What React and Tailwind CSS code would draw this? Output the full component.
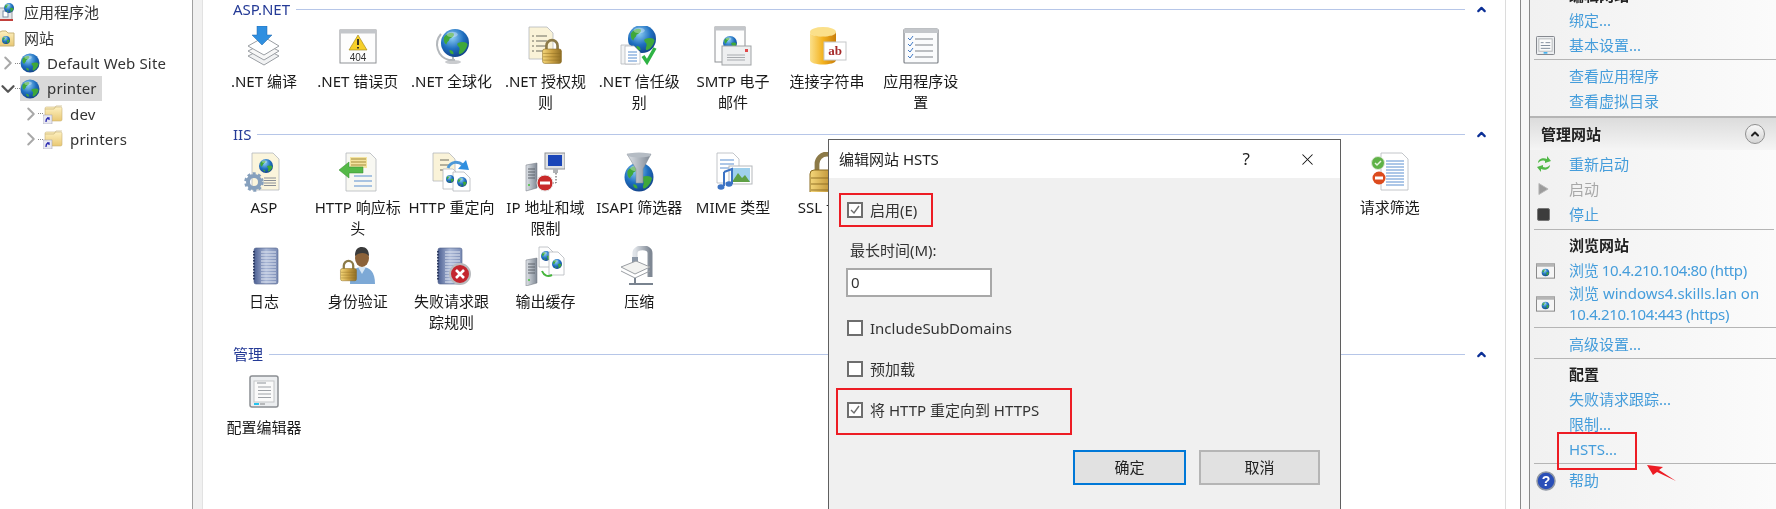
import React from "react";
import { ChevronUp, ChevronRight, ChevronDown, X } from "lucide-react";

const Defs = () => (
  <svg className="absolute w-0 h-0">
    <defs>
      <radialGradient id="globe" cx="40%" cy="30%" r="75%">
        <stop offset="0%" stopColor="#8fd0f5" />
        <stop offset="55%" stopColor="#1f6fc0" />
        <stop offset="100%" stopColor="#123f86" />
      </radialGradient>
      <linearGradient id="gold" x1="0" y1="0" x2="1" y2="0">
        <stop offset="0%" stopColor="#f5d77a" />
        <stop offset="50%" stopColor="#c9a043" />
        <stop offset="100%" stopColor="#8f6e25" />
      </linearGradient>
      <linearGradient id="can" x1="0" y1="0" x2="1" y2="0">
        <stop offset="0%" stopColor="#fbe08a" />
        <stop offset="50%" stopColor="#f3b21f" />
        <stop offset="100%" stopColor="#c97d08" />
      </linearGradient>
      <linearGradient id="book" x1="0" y1="0" x2="1" y2="0">
        <stop offset="0%" stopColor="#4c5f92" />
        <stop offset="50%" stopColor="#a9b7d6" />
        <stop offset="100%" stopColor="#7b8cb5" />
      </linearGradient>
      <linearGradient id="steel" x1="0" y1="0" x2="1" y2="0">
        <stop offset="0%" stopColor="#dfe3e8" />
        <stop offset="100%" stopColor="#7f8894" />
      </linearGradient>
      <linearGradient id="folder" x1="0" y1="0" x2="0" y2="1">
        <stop offset="0%" stopColor="#fdf0c0" />
        <stop offset="100%" stopColor="#e9c873" />
      </linearGradient>
    </defs>
  </svg>
);

const Globe = ({ x, y, r }) => (
  <g transform={`translate(${x} ${y}) scale(${r / 10})`}>
    <circle r="10" fill="url(#globe)" />
    <path d="M-8-4c2-3 5-4 7-3 1 2-1 3-3 4 0 2-2 2-2 4-2-1-2-3-2-5zM2 0c3-1 6-1 7 1-1 4-4 7-6 7-1-2 1-3 0-5-1-1-2-2-1-3zM-4 5c2 0 3 1 3 3-2 0-3-1-3-3z" fill="#3fa83a" />
    <ellipse cx="-2" cy="-6" rx="4" ry="2" fill="#fff" opacity=".35" />
  </g>
);

const Lock = ({ x, y, w = 18 }) => (
  <g transform={`translate(${x} ${y}) scale(${w / 18})`}>
    <path d="M4 10V6a5 5 0 0 1 10 0v4" fill="none" stroke="#8c7a48" strokeWidth="2.4" />
    <rect x="0.5" y="9" width="17" height="13" rx="2" fill="url(#gold)" stroke="#8a6a20" strokeWidth=".5" />
    <path d="M1 13h16M1 16h16M1 19h16" stroke="#8a6a20" strokeWidth=".7" opacity=".6" />
  </g>
);

const Page = ({ x, y, w, h, fill = "#fff" }) => (
  <path d={`M${x} ${y}h${w - 6}l6 6v${h - 6}h-${w}z`} fill={fill} stroke="#b4b8bd" strokeWidth=".8" />
);

const Lines = ({ x, y, w, n, gap = 3, color = "#5b8fd0" }) => (
  <g stroke={color} strokeWidth="1">
    {Array.from({ length: n }).map((_, i) => (
      <path key={i} d={`M${x} ${y + i * gap}h${w}`} />
    ))}
  </g>
);

const Win = ({ x, y, w, h }) => (
  <g>
    <rect x={x} y={y} width={w} height={h} fill="#fdfdfd" stroke="#8f9296" />
    <rect x={x} y={y} width={w} height="3.5" fill="#c3c6ca" />
  </g>
);

const Book = ({ x = 10 }) => (
  <g>
    <rect x={x} y="2" width="24" height="36" rx="2" fill="url(#book)" stroke="#51618c" strokeWidth=".6" />
    <Lines x={x + 7} y={6} w={15} n={11} gap={3} color="#e3e8f2" />
    <path d={`M${x} 5v30`} stroke="#2f3c63" strokeWidth="2" strokeDasharray="1.5 1.5" />
  </g>
);

const Server = ({ x, y }) => (
  <g>
    <path d={`M${x} ${y + 2}l11-2v25l-11 3z`} fill="url(#steel)" stroke="#6c737d" strokeWidth=".5" />
    <Lines x={x + 2} y={y + 6} w={7} n={4} gap={3} color="#5e646c" />
    <circle cx={x + 3} cy={y + 22} r="1" fill="#46c13c" />
  </g>
);

const icons = {
  compile: (
    <g>
      <path d="M4 30l16-8 15 8-15 9z" fill="#f1f2f3" stroke="#9a9ea3" />
      <path d="M4 25l16-8 15 8-15 9z" fill="#f7f7f7" stroke="#9a9ea3" />
      <path d="M4 20l16-9 15 9-15 9z" fill="#fff" stroke="#9a9ea3" />
      <path d="M13 0h10v9h5L18 19 8 9h5z" fill="#2f8fe0" stroke="#1f66ad" strokeWidth=".5" />
    </g>
  ),
  error404: (
    <g>
      <Win x="2" y="4" w="36" h="33" />
      <path d="M20 9l9 15H11z" fill="#f6cf2a" stroke="#9a7f12" strokeWidth=".6" />
      <path d="M20 13v6m0 2v1.6" stroke="#222" strokeWidth="1.8" />
      <text x="20" y="35" fontSize="10" textAnchor="middle" fill="#333" fontFamily="Liberation Sans">404</text>
    </g>
  ),
  globalize: (
    <g>
      <ellipse cx="21" cy="36" rx="8" ry="2" fill="#c9cbce" />
      <path d="M9 8a16 16 0 0 0 8 26h6" fill="none" stroke="#b4b8bc" strokeWidth="2" />
      <path d="M21 30v5" stroke="#b4b8bc" strokeWidth="2" />
      <Globe x={23} y={17} r={14} />
    </g>
  ),
  authRules: (
    <g>
      <Page x="4" y="1" w="24" h="32" fill="#faf3d8" />
      <Lines x="11" y={10} w={11} n={4} gap={5} color="#6d6d60" />
      <Lines x="7" y={10} w={2} n={4} gap={5} color="#6d6d60" />
      <Lock x={17} y={13} w={20} />
    </g>
  ),
  trust: (
    <g>
      <Globe x={23} y={13} r={14} />
      <Page x="2" y="19" w="15" h="19" fill="#f2f3f4" />
      <Page x="6" y="20" w="15" h="18" />
      <Lines x="9" y={26} w={9} n={4} gap={3} />
      <path d="M24 30l4 6 8-14" fill="none" stroke="#2fb344" strokeWidth="3.5" />
    </g>
  ),
  smtp: (
    <g>
      <Win x="2" y="1" w="30" h="35" />
      <Globe x={17} y={17} r={7} />
      <rect x="9" y="20" width="29" height="19" fill="#eeeff0" stroke="#a0a3a6" />
      <rect x="32" y="23" width="3" height="3" fill="#e0484a" />
      <Lines x="14" y={29} w={18} n={3} gap={2.5} color="#a8abaf" />
    </g>
  ),
  connStr: (
    <g>
      <ellipse cx="16" cy="6" rx="13" ry="5" fill="#fbe08a" />
      <path d="M3 6v28c0 6 26 6 26 0V6c0 6-26 6-26 0z" fill="url(#can)" />
      <rect x="17" y="16" width="22" height="18" fill="#fff" stroke="#c5c7c9" />
      <text x="28" y="29" fontSize="13" textAnchor="middle" fontWeight="700" fill="#a52a2a" fontFamily="Liberation Serif">ab</text>
    </g>
  ),
  appSettings: (
    <g>
      <rect x="3" y="3" width="34" height="34" rx="1" fill="#fafbfc" stroke="#7d8187" strokeWidth="1.2" />
      <rect x="3" y="3" width="34" height="4" fill="#c3c6ca" />
      <Lines x="14" y={13} w={18} n={4} gap={6} color="#7d8187" />
      <path d="M7 12l2 2 3-4M7 18l2 2 3-4M7 24l2 2 3-4M7 30l2 2 3-4" fill="none" stroke="#3f78c4" strokeWidth="1" />
    </g>
  ),
  asp: (
    <g>
      <Page x="8" y="1" w="27" h="37" fill="#fbf5dc" />
      <Globe x={22} y={14} r={7} />
      <Lines x="20" y={26} w={12} n={4} gap={2.5} color="#8a8f96" />
      <circle cx="10" cy="30" r="6" fill="none" stroke="#86a0bd" strokeWidth="4" />
      <circle cx="10" cy="30" r="8.5" fill="none" stroke="#86a0bd" strokeWidth="2.5" strokeDasharray="3 2.5" />
    </g>
  ),
  httpHeader: (
    <g>
      <Page x="8" y="1" w="30" h="38" fill="#f8f8f2" />
      <rect x="12" y="5" width="17" height="11" fill="#f4e4a0" />
      <Lines x="13" y={7} w={15} n={3} color="#a58d3a" />
      <Lines x="16" y={24} w={18} n={3} gap={5} color="#5b8fd0" />
      <path d="M1 18l10-8v5h14v6H11v5z" fill="#55b948" stroke="#338a2d" strokeWidth=".5" />
    </g>
  ),
  redirect: (
    <g>
      <Page x="1" y="1" w="22" h="28" fill="#faf3d8" />
      <Lines x="8" y={8} w={9} n={3} gap={5} color="#6d6d60" />
      <Page x="11" y="17" w="16" h="20" />
      <Page x="21" y="20" w="17" h="19" />
      <Globe x={18} y={27} r={4} />
      <Globe x={30} y={30} r={5} />
      <path d="M16 16c3-7 10-7 15-3" fill="none" stroke="#4b97d8" strokeWidth="3" />
      <path d="M26 17l11 1-3-10z" fill="#2f8fe0" />
    </g>
  ),
  ipRestrict: (
    <g>
      <Server x={1} y={11} />
      <rect x="20" y="1" width="20" height="16" fill="#dfe1e3" stroke="#8f9296" />
      <rect x="23" y="3" width="14" height="11" fill="#1b46b8" />
      <rect x="28" y="17" width="5" height="4" fill="#b0b2b5" />
      <path d="M31 21v10h-6" fill="none" stroke="#444" strokeDasharray="1.5 1.5" />
      <circle cx="20" cy="31" r="8" fill="#c92a2a" stroke="#e8e8e8" />
      <rect x="15" y="29.5" width="10" height="3" fill="#fff" />
    </g>
  ),
  isapi: (
    <g>
      <Globe x={20} y={25} r={14.5} />
      <path d="M8 2h24L24 17v14h-7V17z" fill="url(#steel)" stroke="#7c848d" strokeWidth=".5" />
      <ellipse cx="20" cy="3" rx="12" ry="2.5" fill="#b5bcc4" />
    </g>
  ),
  mime: (
    <g>
      <Page x="4" y="1" w="22" h="30" />
      <Lines x="7" y={8} w={14} n={3} gap={4} />
      <rect x="16" y="14" width="23" height="18" fill="#fff" stroke="#b5b8bb" />
      <rect x="18" y="16" width="19" height="14" fill="#9fd0ec" />
      <path d="M19 30l6-9 4 5 3-3 5 7z" fill="#5fa045" />
      <path d="M11 20l8-3v15" fill="none" stroke="#3c73c4" strokeWidth="2" />
      <path d="M11 20v14" stroke="#3c73c4" strokeWidth="2" />
      <ellipse cx="8" cy="35" rx="3.5" ry="2.8" fill="#3c73c4" />
      <ellipse cx="16" cy="32" rx="3.5" ry="2.8" fill="#3c73c4" />
    </g>
  ),
  ssl: <Lock x={2} y={0} w={36} />,
  filter: (
    <g>
      <Page x="11" y="1" w="27" h="37" />
      <Lines x="16" y={9} w={18} n={9} gap={3} />
      <circle cx="8" cy="11" r="6.5" fill="#5fb247" stroke="#dfe8d8" />
      <path d="M5 11l2 2 4-4" fill="none" stroke="#e8f5e0" strokeWidth="1.5" />
      <circle cx="9" cy="26" r="6.5" fill="#dc4b1e" />
      <rect x="5" y="24.5" width="8" height="3" fill="#fff" />
    </g>
  ),
  log: <Book />,
  auth: (
    <g>
      <path d="M12 38c0-12 4-17 12-17s13 5 13 17z" fill="#7da9d6" />
      <path d="M20 21l4 7 4-7z" fill="#d6e6f5" />
      <ellipse cx="24" cy="12" rx="7" ry="9" fill="#8c6239" />
      <path d="M17 10c0-7 3-9 7-9s7 3 7 9c-3-4-10-4-14 0z" fill="#3a3a3a" />
      <Lock x={2} y={14} w={17} />
    </g>
  ),
  failLog: (
    <g>
      <Book x={6} />
      <circle cx="28" cy="28" r="10" fill="#c4262e" stroke="#b9bbbe" strokeWidth="2" />
      <path d="M24 24l8 8m0-8l-8 8" stroke="#fff" strokeWidth="2.6" />
    </g>
  ),
  output: (
    <g>
      <Server x={1} y={12} />
      <Page x="14" y="1" w="15" h="20" fill="#fdfdfd" />
      <Globe x={21} y={10} r={5} />
      <Page x="24" y="6" w="15" h="23" />
      <Globe x={32} y={18} r={5} />
      <path d="M17 25c2 5 6 6 10 4" fill="none" stroke="#46b53c" strokeWidth="2" />
    </g>
  ),
  compress: (
    <g>
      <path d="M31 31V7c0-7-15-7-15 0v5" fill="none" stroke="url(#steel)" strokeWidth="5" />
      <rect x="13" y="11" width="6" height="6" fill="#8b97a6" />
      <path d="M2 21l15-6 14 6-15 7z" fill="#f3f3f1" stroke="#9a9ea3" />
      <path d="M2 25l14 7 15-7" fill="none" stroke="#9a9ea3" />
      <path d="M16 32v5M10 38h24" stroke="#79838f" strokeWidth="2" />
    </g>
  ),
  config: (
    <g>
      <rect x="6" y="4" width="28" height="31" rx="2" fill="#eceef0" stroke="#8b8e92" strokeWidth="1.5" />
      <rect x="10" y="9" width="20" height="21" fill="#fafafa" stroke="#c4c6c8" />
      <rect x="13" y="10" width="9" height="2" fill="#c3c6c9" />
      <Lines x="14" y={15} w={13} n={4} gap={3.5} color="#9ea2a7" />
      <rect x="10" y="31" width="5" height="2" fill="#25c3ee" />
      <rect x="16" y="31" width="5" height="2" fill="#b7b9bb" />
    </g>
  ),
};

const Icon = ({ name }) => (
  <svg viewBox="0 0 40 40" className="w-10 h-10 block">
    {icons[name]}
  </svg>
);

const Tile = ({ icon, label }) => (
  <div className="w-[93.83px] shrink-0 h-full flex flex-col items-center">
    <Icon name={icon} />
    <div className="mt-[5px] text-center whitespace-pre leading-[21px] text-[#1a1a1a]">{label}</div>
  </div>
);

const SectionHeader = ({ title }) => (
  <div className="h-[18px] flex items-center pl-[30px] pr-[8px]">
    <span className="text-[#243a96] leading-none">{title}</span>
    <div className="ml-[6px] flex-1 h-px bg-[#b6c6e8]" />
    <div className="w-[32px] flex justify-center">
      <ChevronUp size={13} strokeWidth={4} className="text-[#0b2f96]" />
    </div>
  </div>
);

const TreeRow = ({ indent, open, kind, label, selected }) => (
  <div className="h-[25.33px] flex items-center relative" style={{ paddingLeft: indent }}>
    {open ? (
      <ChevronDown size={22} strokeWidth={2.5} className="text-[#555] shrink-0 -mx-[3.5px]" />
    ) : (
      <ChevronRight size={22} strokeWidth={2.2} className="text-[#a8a8a8] shrink-0 -mx-[3.5px]" />
    )}
    <div className="w-[5px] border-t border-dotted border-[#888] shrink-0" />
    <div className={`flex items-center h-[25px] pr-[5px] ${selected ? "bg-[#d9d9d9]" : ""}`}>
      <svg viewBox="0 0 20 20" className="w-5 h-5 shrink-0">
        {kind === "globe" ? (
          <Globe x={10} y={10} r={9.5} />
        ) : (
          <g>
            <rect x="2" y="3" width="17" height="14" rx="1.5" fill="url(#folder)" stroke="#c9b478" strokeWidth=".6" />
            <path d="M2 5h9l2-3h6" fill="none" stroke="#c9b478" strokeWidth=".7" />
            <rect x="0" y="11" width="9" height="9" fill="#e8e8f0" stroke="#9a9ab0" strokeWidth=".5" />
            <path d="M3 18c0-3 1-4 3-4m-2 0h2v2" fill="none" stroke="#2a2ab0" strokeWidth="1.3" />
          </g>
        )}
      </svg>
      <span className="ml-[7px] whitespace-nowrap text-[#333] tracking-[0.15px]">{label}</span>
    </div>
  </div>
);

const TreePane = () => (
  <div className="w-[193px] shrink-0 border-r border-[#a0a0a0] overflow-hidden">
    <div className="h-[25.33px] flex items-center -ml-[4px]">
      <svg viewBox="0 0 20 20" className="w-5 h-5 shrink-0">
        <rect x="2" y="5" width="14" height="12" fill="#e4e6e8" stroke="#9a9ea3" />
        <rect x="7" y="8" width="5" height="6" fill="#fff" stroke="#7b8ea3" />
        <path d="M1 17h16" stroke="#c2403c" strokeWidth="2" />
        <Globe x={13} y={5} r={5} />
      </svg>
      <span className="ml-[8px] text-[#333]">应用程序池</span>
    </div>
    <div className="h-[25.33px] flex items-center -ml-[4px]">
      <svg viewBox="0 0 20 20" className="w-5 h-5 shrink-0">
        <path d="M2 5l4-2h4l2 2h6v13H2z" fill="url(#folder)" stroke="#c9b478" />
        <Globe x={10} y={12} r={4} />
      </svg>
      <span className="ml-[8px] text-[#333]">网站</span>
    </div>
    <TreeRow indent={0} kind="globe" label="Default Web Site" />
    <TreeRow indent={0} open kind="globe" label="printer" selected />
    <TreeRow indent={23} kind="folder" label="dev" />
    <TreeRow indent={23} kind="folder" label="printers" />
  </div>
);

const row1 = [
  ["compile", ".NET 编译"],
  ["error404", ".NET 错误页"],
  ["globalize", ".NET 全球化"],
  ["authRules", ".NET 授权规\n则"],
  ["trust", ".NET 信任级\n别"],
  ["smtp", "SMTP 电子\n邮件"],
  ["connStr", "连接字符串"],
  ["appSettings", "应用程序设\n置"],
];
const row2 = [
  ["asp", "ASP"],
  ["httpHeader", "HTTP 响应标\n头"],
  ["redirect", "HTTP 重定向"],
  ["ipRestrict", "IP 地址和域\n限制"],
  ["isapi", "ISAPI 筛选器"],
  ["mime", "MIME 类型"],
  ["ssl", "SSL 设置"],
];
const row3 = [
  ["log", "日志"],
  ["auth", "身份验证"],
  ["failLog", "失败请求跟\n踪规则"],
  ["output", "输出缓存"],
  ["compress", "压缩"],
];

const MainPane = () => (
  <div className="w-[1303px] shrink-0 border-r border-[#dcdcdc]">
    <SectionHeader title="ASP.NET" />
    <div className="flex h-[107px] pl-[14px] pt-[8px]">
      {row1.map(([i, l]) => (
        <Tile key={i} icon={i} label={l} />
      ))}
    </div>
    <SectionHeader title="IIS" />
    <div className="flex h-[103px] pl-[14px] pt-[9px]">
      {row2.map(([i, l]) => (
        <Tile key={i} icon={i} label={l} />
      ))}
      <div className="w-[469px] shrink-0" />
      <Tile icon="filter" label="请求筛选" />
    </div>
    <div className="flex h-[99px] pl-[14px]">
      {row3.map(([i, l]) => (
        <Tile key={i} icon={i} label={l} />
      ))}
    </div>
    <SectionHeader title="管理" />
    <div className="flex pl-[14px] pt-[9px]">
      <Tile icon="config" label="配置编辑器" />
    </div>
  </div>
);

const WinGlyph = () => (
  <svg viewBox="0 0 20 16" className="w-[19px] h-[16px]">
    <rect x=".5" y=".5" width="19" height="15" fill="#f5f5f5" stroke="#858585" />
    <rect x=".5" y=".5" width="19" height="3" fill="#b5b5b5" />
    <Globe x={10} y={9.5} r={4} />
  </svg>
);

const Sep = ({ cls = "" }) => <div className={`h-px ml-[4px] bg-[#b5b5b5] ${cls}`} />;

const Action = ({ icon, children, color = "text-[#459ddb]", tall, cls = "" }) => (
  <div className={`flex items-center pl-[6px] ${tall ? "h-[42px]" : "h-[25px]"}`}>
    <div className="w-[33px] shrink-0 flex items-center">{icon}</div>
    <div className={`leading-[21px] whitespace-pre ${color} ${cls}`}>{children}</div>
  </div>
);

const ActionTitle = ({ children, cls = "" }) => (
  <div className={`h-[25px] flex items-center pl-[39px] font-bold text-[#222] ${cls}`}>{children}</div>
);

const ActionPane = () => (
  <div className="flex-1 border-l border-[#8a8a8a] bg-gradient-to-r from-[#f1f1f1] to-[#fbfbfb] overflow-hidden">
    <ActionTitle cls="-mt-[17px]">编辑网站</ActionTitle>
    <Action>绑定...</Action>
    <Action
      icon={
        <svg viewBox="0 0 20 20" className="w-[19px] h-[19px]">
          <rect x=".5" y=".5" width="19" height="19" rx="1" fill="#eceef0" stroke="#7d8187" />
          <rect x="3" y="3" width="14" height="13" fill="#fbfbfb" stroke="#b5b8bb" />
          <path d="M5 7h3M10 7h5M5 10h10M5 13h10" stroke="#7d8a9a" />
          <rect x="8" y="17" width="4" height="1.5" fill="#25a6ee" />
        </svg>
      }
    >
      基本设置...
    </Action>
    <Sep cls="mt-px mb-[4px]" />
    <Action>查看应用程序</Action>
    <Action>查看虚拟目录</Action>
    <div className="mt-[2px] h-[34px] flex items-center justify-between border-t-2 border-[#b5b5b5] bg-gradient-to-b from-[#dcdcdc] to-[#f5f5f5] pl-[11px] pr-[11px]">
      <span className="font-bold text-[#222]">管理网站</span>
      <span className="w-5 h-5 rounded-full border border-[#8f8f8f] bg-gradient-to-b from-[#f8f8f8] to-[#d5d5d5] grid place-items-center">
        <ChevronUp size={12} strokeWidth={4} className="text-[#222]" />
      </span>
    </div>
    <div className="mt-[1.5px]">
      <Action
        icon={
          <svg viewBox="0 0 16 20" className="w-[16px] h-[20px]">
            <path d="M2 9c0-4 5-6 9-4V2l4 5-6 2V7c-3-1-5 0-7 2z" fill="#52b848" />
            <path d="M14 11c0 4-5 6-9 4v3l-4-5 6-2v2c3 1 5 0 7-2z" fill="#52b848" />
          </svg>
        }
      >
        重新启动
      </Action>
      <Action
        color="text-[#a8a8a8]"
        icon={
          <svg viewBox="0 0 12 14" className="w-[11px] h-[14px] ml-[2px]">
            <path d="M1 1l10 6-10 6z" fill="#9c9c9c" stroke="#b8b8b8" />
          </svg>
        }
      >
        启动
      </Action>
      <Action icon={<div className="w-[13px] h-[13px] rounded-[2px] bg-[#3d3d3d] border border-[#777] ml-px" />}>停止</Action>
    </div>
    <Sep cls="mt-[2px] mb-[3.5px] mr-[2px]" />
    <ActionTitle>浏览网站</ActionTitle>
    <Action cls="tracking-[-0.35px]" icon={<WinGlyph />}>浏览 10.4.210.104:80 (http)</Action>
    <Action tall icon={<WinGlyph />}>
      浏览 windows4.skills.lan on{"\n"}
      <span className="tracking-[-0.35px]">10.4.210.104:443 (https)</span>
    </Action>
    <Sep cls="mt-[2px] mb-[4px]" />
    <Action>高级设置...</Action>
    <Sep cls="mt-px mb-[3px]" />
    <ActionTitle>配置</ActionTitle>
    <Action>失败请求跟踪...</Action>
    <Action>限制...</Action>
    <Action>HSTS...</Action>
    <Sep cls="mt-px mb-[4px]" />
    <Action
      icon={
        <svg viewBox="0 0 20 20" className="w-[20px] h-[20px]">
          <circle cx="10" cy="10" r="9" fill="#2a4fb8" stroke="#8f96a3" strokeWidth="1.5" />
          <text x="10" y="15" fontSize="14" textAnchor="middle" fontWeight="700" fill="#fff" fontFamily="Liberation Sans">?</text>
        </svg>
      }
    >
      帮助
    </Action>
  </div>
);

const Check = ({ checked, label }) => (
  <div className="flex items-center h-4 pl-[18px]">
    <div className="w-4 h-4 border-2 border-[#6e6e6e] bg-white grid place-items-center shrink-0">
      {checked && (
        <svg viewBox="0 0 12 12" className="w-3 h-3">
          <path d="M2 6l3 3 5-7" fill="none" stroke="#6e6e6e" strokeWidth="1.4" />
        </svg>
      )}
    </div>
    <span className="ml-[7px] text-[#333] whitespace-nowrap">{label}</span>
  </div>
);

const Dialog = () => (
  <div className="absolute left-[828px] top-[139px] w-[513px] h-[400px] border border-[#5f5f5f] bg-[#f0f0f0]">
    <div className="h-[38px] bg-white flex items-center pl-[10px] pr-[23px] text-[#222]">
      <span className="flex-1">编辑网站 HSTS</span>
      <span className="mr-[48px] text-[17px]">?</span>
      <X size={19} strokeWidth={1.3} className="text-[#111]" />
    </div>
    <div className="pt-[24px]">
      <Check checked label="启用(E)" />
      <div className="mt-[22px] pl-[21px] h-5 leading-5 text-[#333]">最长时间(M):</div>
      <div className="mt-[8px] ml-[17px] w-[146px] h-[29px] border-2 border-[#a8a8a8] bg-white pl-[3px] leading-[25px] text-[#333]">0</div>
      <div className="mt-[23px]"><Check label="IncludeSubDomains" /></div>
      <div className="mt-[25px]"><Check label="预加载" /></div>
      <div className="mt-[25px]"><Check checked label="将 HTTP 重定向到 HTTPS" /></div>
      <div className="mt-[32px] flex justify-end gap-[13px] pr-[20px]">
        <button className="w-[113px] h-[35px] border-2 border-[#0078d7] bg-[#e1e1e1] text-[#222]">确定</button>
        <button className="w-[121px] h-[35px] border-2 border-[#b5b5b5] bg-[#e1e1e1] text-[#222]">取消</button>
      </div>
    </div>
  </div>
);

const RedBox = ({ cls }) => <div className={`absolute border-2 border-[#ed1c24] ${cls}`} />;

export default function App() {
  return (
    <div
      className="relative w-[1776px] h-[509px] overflow-hidden bg-white flex text-[15px] blur-[0.35px]"
      style={{ fontFamily: '"Noto Sans", "Noto Sans CJK SC", sans-serif' }}
    >
      <Defs />
      <TreePane />
      <div className="w-[10px] shrink-0 bg-[#f0f0f0] border-r border-[#e2e2e2]" />
      <MainPane />
      <div className="w-[15px] shrink-0 border-r border-[#8a8a8a]" />
      <div className="w-[8px] shrink-0 bg-[#f8f8f8]" />
      <ActionPane />
      <Dialog />
      <RedBox cls="left-[839px] top-[193px] w-[94px] h-[34px]" />
      <RedBox cls="left-[836px] top-[388px] w-[236px] h-[47px]" />
      <RedBox cls="left-[1557px] top-[432px] w-[80px] h-[38px]" />
      <svg viewBox="0 0 40 24" className="absolute left-[1644px] top-[462px] w-10 h-6">
        <path d="M3 3l16 2-4 3 17 11-19-9-4 3z" fill="#ed1c24" />
      </svg>
    </div>
  );
}
